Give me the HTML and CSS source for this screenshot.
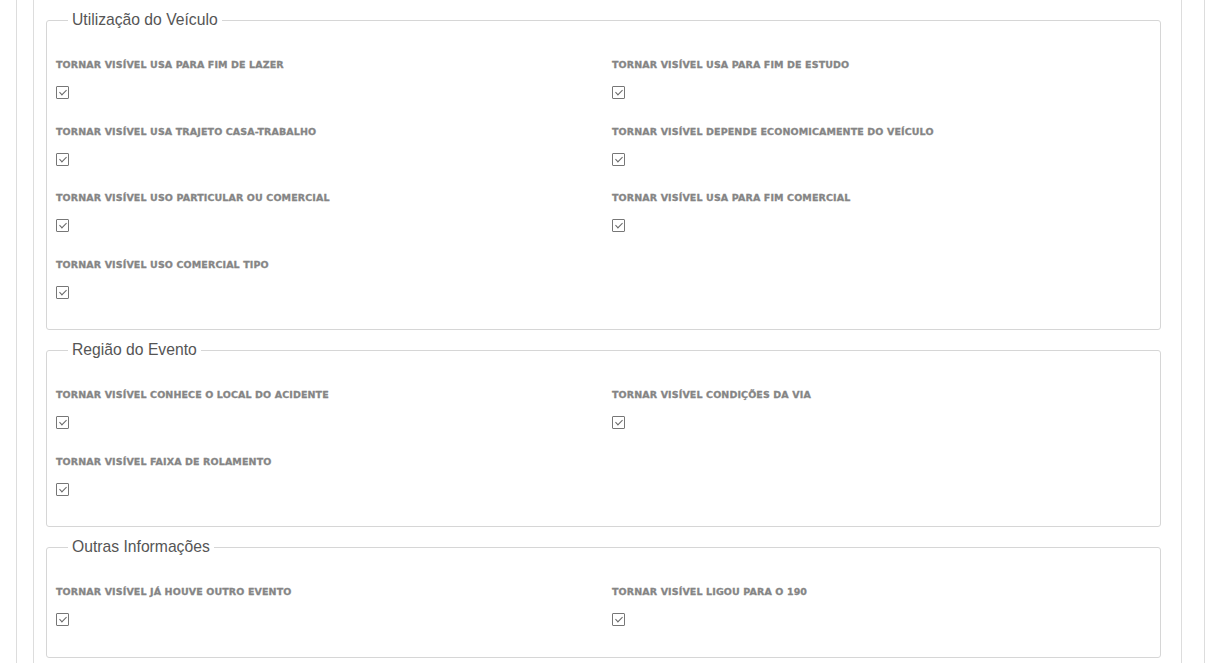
FILE: index.html
```html
<!DOCTYPE html>
<html lang="pt-BR">
<head>
<meta charset="utf-8">
<link rel="stylesheet" href="styles.css">
</head>
<body>
<div class="outer">
  <div class="panel">
    <fieldset class="group">
      <legend>Utilização do Veículo</legend>
      <div class="grid">
        <div class="field"><label>Tornar visível usa para fim de lazer</label><span class="cb"></span></div>
        <div class="field"><label>Tornar visível usa para fim de estudo</label><span class="cb"></span></div>
        <div class="field"><label>Tornar visível usa trajeto casa-trabalho</label><span class="cb"></span></div>
        <div class="field"><label>Tornar visível depende economicamente do veículo</label><span class="cb"></span></div>
        <div class="field"><label>Tornar visível uso particular ou comercial</label><span class="cb"></span></div>
        <div class="field"><label>Tornar visível usa para fim comercial</label><span class="cb"></span></div>
        <div class="field"><label>Tornar visível uso comercial tipo</label><span class="cb"></span></div>
      </div>
    </fieldset>
    <fieldset class="group">
      <legend>Região do Evento</legend>
      <div class="grid">
        <div class="field"><label>Tornar visível conhece o local do acidente</label><span class="cb"></span></div>
        <div class="field"><label>Tornar visível condições da via</label><span class="cb"></span></div>
        <div class="field"><label>Tornar visível faixa de rolamento</label><span class="cb"></span></div>
      </div>
    </fieldset>
    <fieldset class="group">
      <legend>Outras Informações</legend>
      <div class="grid">
        <div class="field"><label>Tornar visível já houve outro evento</label><span class="cb"></span></div>
        <div class="field"><label>Tornar visível ligou para o 190</label><span class="cb"></span></div>
      </div>
    </fieldset>
  </div>
</div>
</body>
</html>
```
FILE: styles.css
```css
html, body {
  margin: 0;
  padding: 0;
  background: #fff;
  font-family: "Liberation Sans", Arial, sans-serif;
}
.outer {
  margin-left: 16px;
  width: 1189px;
  border-left: 1px solid #ddd;
  border-right: 1px solid #ddd;
  height: 663px;
  box-sizing: border-box;
  padding-left: 16px;
}
.panel {
  width: 1149px;
  border-left: 1px solid #ddd;
  border-right: 1px solid #ddd;
  height: 663px;
  box-sizing: border-box;
  padding: 10px 20px 0 12px;
}
.group {
  margin: 0 0 10px 0;
  border: 1px solid #d6d6d6;
  border-radius: 3px;
  padding: 29px 0 4px 9px;
}
.group legend {
  font-size: 15.7px;
  color: #555;
  padding: 0 4px;
  margin-left: 12px;
  line-height: 20px;
}
.grid {
  display: grid;
  grid-template-columns: 556px 1fr;
  row-gap: 0;
}
.field {
  height: 66.5px;
  display: flex;
  flex-direction: column;
}
.field label {
  font-family: "DejaVu Sans", sans-serif;
  font-weight: 900;
  font-size: 9.5px;
  color: #858585;
  -webkit-text-stroke: 0.3px #858585;
  text-transform: uppercase;
  line-height: 12px;
  letter-spacing: 0.12px;
}
.cb {
  margin-top: 15px;
  width: 11px;
  height: 11px;
  border: 1px solid #777;
  border-radius: 1px;
  position: relative;
}
.cb::after {
  content: "";
  position: absolute;
  left: 3.5px;
  top: 1px;
  width: 3px;
  height: 6px;
  border-right: 1.6px solid #666;
  border-bottom: 1.6px solid #666;
  transform: rotate(45deg);
}
```
